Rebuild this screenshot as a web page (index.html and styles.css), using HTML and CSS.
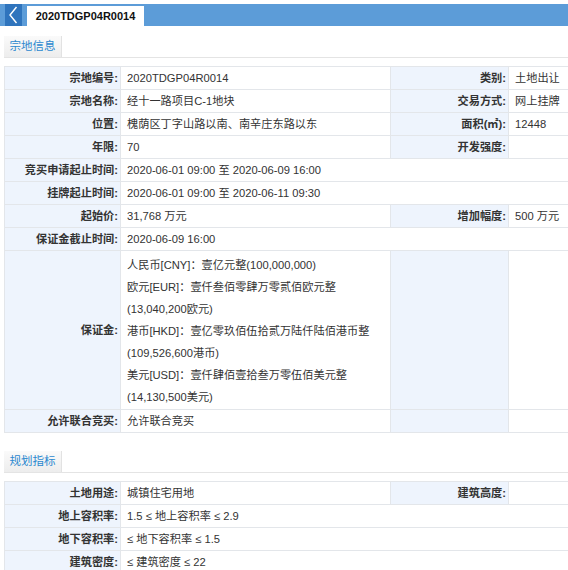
FILE: index.html
```html
<!DOCTYPE html>
<html lang="zh-CN">
<head>
<meta charset="utf-8">
<title>2020TDGP04R0014</title>
<link rel="stylesheet" href="styles.css">
</head>
<body>
<div class="topbar">
  <a class="back" href="#" aria-label="返回">
    <svg width="17" height="22" viewBox="0 0 17 22"><path d="M11.5 3 L5 11 L11.5 19" fill="none" stroke="#fff" stroke-width="1.4"/></svg>
  </a>
  <div class="tab">2020TDGP04R0014</div>
</div>

<div class="section">
  <div class="sec-head"><span class="sec-title">宗地信息</span></div>
  <table class="info">
    <colgroup><col class="c1"><col class="c2"><col class="c3"><col class="c4"></colgroup>
    <tr><th>宗地编号:</th><td>2020TDGP04R0014</td><th>类别:</th><td>土地出让</td></tr>
    <tr><th>宗地名称:</th><td>经十一路项目C-1地块</td><th>交易方式:</th><td>网上挂牌</td></tr>
    <tr><th>位置:</th><td>槐荫区丁字山路以南、南辛庄东路以东</td><th>面积(㎡):</th><td>12448</td></tr>
    <tr><th>年限:</th><td>70</td><th>开发强度:</th><td></td></tr>
    <tr><th>竞买申请起止时间:</th><td colspan="3">2020-06-01 09:00 至 2020-06-09 16:00</td></tr>
    <tr><th>挂牌起止时间:</th><td colspan="3">2020-06-01 09:00 至 2020-06-11 09:30</td></tr>
    <tr><th>起始价:</th><td>31,768 万元</td><th>增加幅度:</th><td>500 万元</td></tr>
    <tr><th>保证金截止时间:</th><td colspan="3">2020-06-09 16:00</td></tr>
    <tr class="multi"><th>保证金:</th><td>人民币[CNY]<span class="fw">：</span>壹亿元整(100,000,000)<br>欧元[EUR]<span class="fw">：</span>壹仟叁佰零肆万零贰佰欧元整<br>(13,040,200欧元)<br>港币[HKD]<span class="fw">：</span>壹亿零玖佰伍拾贰万陆仟陆佰港币整<br>(109,526,600港币)<br>美元[USD]<span class="fw">：</span>壹仟肆佰壹拾叁万零伍佰美元整<br>(14,130,500美元)</td><th></th><td></td></tr>
    <tr><th>允许联合竞买:</th><td>允许联合竞买</td><th></th><td></td></tr>
  </table>
</div>

<div class="section second">
  <div class="sec-head"><span class="sec-title">规划指标</span></div>
  <table class="info">
    <colgroup><col class="c1"><col class="c2"><col class="c3"><col class="c4"></colgroup>
    <tr><th>土地用途:</th><td>城镇住宅用地</td><th>建筑高度:</th><td></td></tr>
    <tr><th>地上容积率:</th><td colspan="3">1.5 ≤ 地上容积率 ≤ 2.9</td></tr>
    <tr><th>地下容积率:</th><td colspan="3">≤ 地下容积率 ≤ 1.5</td></tr>
    <tr><th>建筑密度:</th><td colspan="3">≤ 建筑密度 ≤ 22</td></tr>
  </table>
</div>
</body>
</html>
```

FILE: styles.css
```css
html, body {
  margin: 0;
  padding: 0;
  overflow: hidden;
  background: #fff;
}
body {
  font-family: "Liberation Sans", "Noto Sans CJK SC", sans-serif;
  font-size: 11.2px;
  color: #333;
}
.topbar {
  margin-top: 4px;
  height: 22px;
  background: #5c9cd8;
  display: flex;
  align-items: flex-end;
}
.back {
  margin-left: 5px;
  width: 17px;
  height: 22px;
  background: #2f74bd;
  display: flex;
  align-items: center;
  justify-content: center;
  align-self: stretch;
}
.back svg { display: block; }
.tab {
  margin-left: 5px;
  width: 117px;
  height: 20px;
  background: #fff;
  font-weight: bold;
  font-size: 11px;
  color: #111;
  display: flex;
  align-items: center;
  justify-content: center;
}
.section {
  padding-left: 4px;
  margin-top: 10px;
}
.section.second {
  margin-top: 18px;
}
.sec-head {
  border-bottom: 1px solid #e4e4e4;
  display: flex;
}
.sec-title {
  width: 57px;
  height: 21px;
  line-height: 21px;
  text-align: center;
  color: #2b88cf;
  font-size: 11.5px;
  background: linear-gradient(#fafafa, #ededed);
  border-right: 1px solid #e2e2e2;
}
.info {
  margin-top: 8px;
  width: 564px;
  border-collapse: collapse;
  table-layout: fixed;
}
.c1 { width: 116px; }
.c2 { width: 270px; }
.c3 { width: 118px; }
.info th, .info td {
  border: 1px solid #e3e6ea;
  padding: 0;
  height: 22px;
  line-height: 22px;
  white-space: nowrap;
  overflow: hidden;
}
.info tr > :last-child {
  border-right: none;
}
.info th {
  background: #eef4fd;
  text-align: right;
  font-weight: bold;
  padding-right: 2px;
  color: #333;
}
.info td {
  text-align: left;
  padding-left: 6px;
  background: #fff;
}
.info tr.multi td {
  padding-top: 3px;
  padding-bottom: 1px;
  vertical-align: top;
}
.info tr.multi th {
  vertical-align: middle;
}
.fw {
  font-family: "Noto Sans CJK TC", "Noto Sans CJK SC", sans-serif;
  line-height: 0;
}
```
